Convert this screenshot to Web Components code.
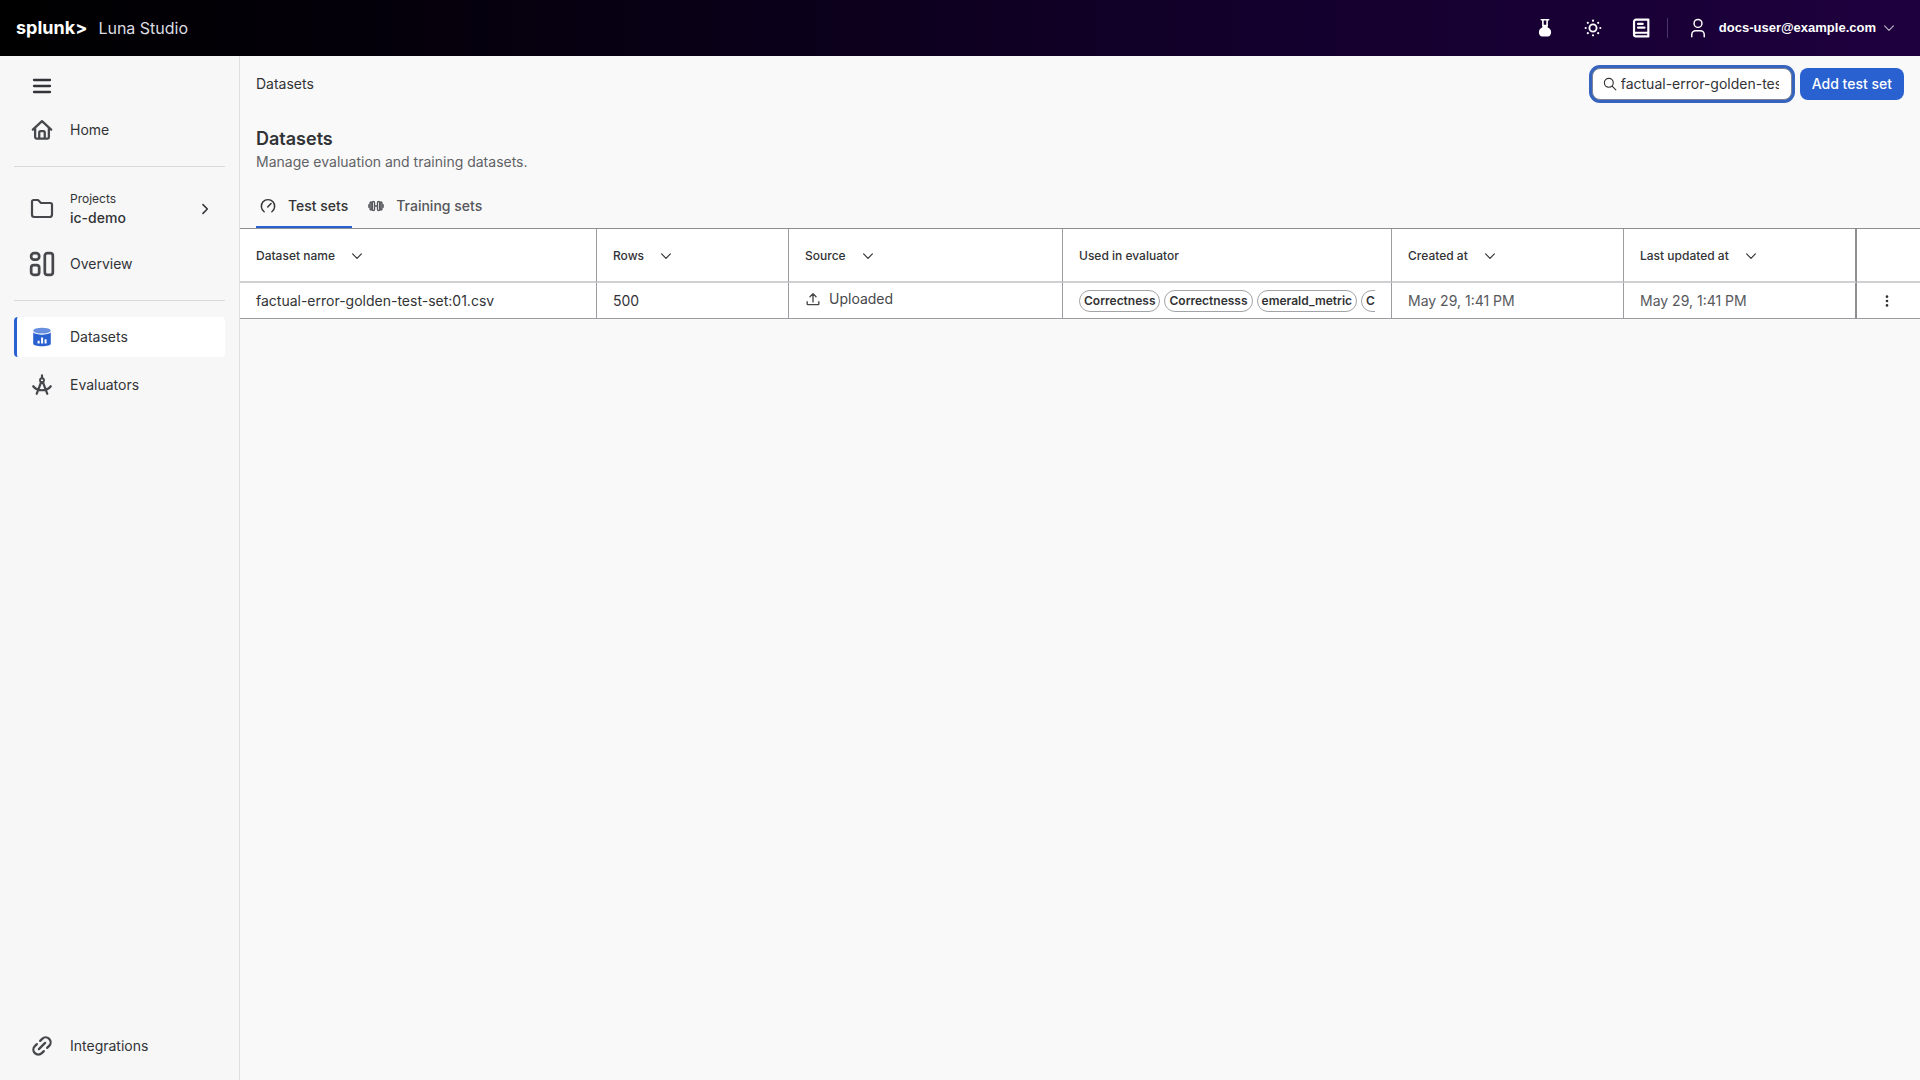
<!DOCTYPE html>
<html lang="en">
<head>
<meta charset="utf-8">
<meta name="viewport" content="width=device-width, initial-scale=1">
<title>Datasets - Luna Studio</title>
<style>
    :root {
        --text: #323336;
        --text-muted: #616266;
        --accent: #2a61d1;
        --surface: #f9f9f9;
        --line: #9c9da0;
    }
    body {
        margin: 0;
        font-family: Inter, "Liberation Sans", sans-serif;
        font-size: 14px;
        line-height: 20px;
        color: var(--text);
        background: var(--surface);
    }
</style>
</head>
<body>
<luna-app>
    <luna-header slot="header" product="Luna Studio" user="docs-user@example.com"></luna-header>
    <luna-sidebar slot="sidebar">
        <luna-nav-item icon="home" href="#home">Home</luna-nav-item>
        <hr>
        <luna-project-picker label="Projects">ic-demo</luna-project-picker>
        <luna-nav-item icon="overview" size="26" href="#overview">Overview</luna-nav-item>
        <hr>
        <luna-nav-item icon="database" href="#datasets" active>Datasets</luna-nav-item>
        <luna-nav-item icon="compass" href="#evaluators">Evaluators</luna-nav-item>
        <luna-nav-item slot="footer" icon="link" href="#integrations">Integrations</luna-nav-item>
    </luna-sidebar>
    <luna-toolbar crumb="Datasets" query="factual-error-golden-test-set">Add test set</luna-toolbar>
    <luna-page-title>
        Datasets
        <span slot="description">Manage evaluation and training datasets.</span>
    </luna-page-title>
    <luna-tabs></luna-tabs>
    <luna-dataset-table></luna-dataset-table>
</luna-app>

<script>
const ICONS = {
    menu: '<path d="M4 6h16M4 12h16M4 18h16" stroke-width="2.300"/>',
    home: '<path d="M2 11.600 12 2.400l10 9.200M4.500 10v9.600a1.800 1.800 0 0 0 1.800 1.800h11.400a1.800 1.800 0 0 0 1.800-1.800V10M9 21v-6.200a1.500 1.500 0 0 1 1.500-1.500h3a1.500 1.500 0 0 1 1.500 1.500V21" stroke-width="2.500"/>',
    folder: '<path d="M2 17.800V4.600A1.600 1.600 0 0 1 3.600 3h4.400l3 3h9.400a1.600 1.600 0 0 1 1.600 1.600v10.200a2.200 2.200 0 0 1-2.200 2.200H4.200a2.200 2.200 0 0 1-2.200-2.200z" stroke-width="2.200"/>',
    overview: '<rect x="2" y="2" width="7.400" height="6" rx="2.800" stroke-width="2.500"/><rect x="2" y="13" width="7.400" height="9" rx="2.400" stroke-width="2.500"/><rect x="14.600" y="2" width="7.400" height="20" rx="2.400" stroke-width="2.500"/>',
    database: '<g stroke="none" fill="var(--accent)"><ellipse cx="12" cy="5" rx="9.600" ry="3.200" opacity=".7"/><path d="M2.400 7.200c2 1.600 5.600 2.300 9.600 2.300s7.600-.7 9.600-2.300v11.800c0 2-4.200 3-9.600 3s-9.600-1-9.600-3z"/><path d="M7.200 16h2.200v3.200H7.200zM11 12.600h2.200v6.600H11zM14.800 14.400H17v4.800h-2.200z" fill="#fff"/></g>',
    compass: '<circle cx="12" cy="6.800" r="2.200"/><path d="M12 1.600v3M11 9 6.200 21.600M13 9l4.800 12.600M2.400 13.400c4.400 5.800 14.800 5.800 19.200 0" stroke-width="2.400"/>',
    link: '<path d="M8.600 15.400l6.800-6.800M10 6.400l2.200-2.200a5.200 5.200 0 0 1 7.600 7.600L17.600 14M6.400 10l-2.200 2.200a5.200 5.200 0 0 0 7.600 7.600L14 17.600" stroke-width="2.500"/>',
    flask: '<path d="M8 3h8M9.700 3v6.500M14.300 3v6.500" stroke-width="1.800"/><path d="M9.200 8.500h5.600v2.800c2.400 1.200 3.900 3 3.900 5.400 0 2.400-1.500 4.700-3.700 4.700H9c-2.200 0-3.700-2.300-3.700-4.700 0-2.400 1.500-4.200 3.900-5.400z" fill="currentColor" stroke="none"/>',
    sun: '<circle cx="12" cy="12" r="4.300" stroke-width="2.200"/><g fill="currentColor" stroke="none"><circle cx="12" cy="3.200" r="1.300"/><circle cx="12" cy="20.800" r="1.300"/><circle cx="3.200" cy="12" r="1.300"/><circle cx="20.800" cy="12" r="1.300"/><circle cx="5.800" cy="5.800" r="1.300"/><circle cx="18.200" cy="5.800" r="1.300"/><circle cx="5.800" cy="18.200" r="1.300"/><circle cx="18.200" cy="18.200" r="1.300"/></g>',
    book: '<path d="M4.400 19V5a2.200 2.200 0 0 1 2.200-2.200H20v14.400H6.400a2 2 0 0 0 0 4H20v-4M8.800 7.600h5M8.800 11.600h7" stroke-width="2.400"/>',
    user: '<circle cx="12" cy="7" r="4.300" stroke-width="1.600"/><path d="M5.200 21.600v-2.400a4.300 4.300 0 0 1 4.300-4.300h5a4.300 4.300 0 0 1 4.300 4.300v2.400" stroke-width="1.600"/>',
    down: '<path d="M4.500 8.500 12 16l7.500-7.500"/>',
    right: '<path d="M8.500 4.500 16 12l-7.500 7.500" stroke-width="2.600"/>',
    search: '<circle cx="10" cy="10" r="7.600"/><path d="M15.600 15.600 22 22"/>',
    gauge: '<path d="M6.200 20.600a10 10 0 1 1 11.600 0M11.600 13.600l5-5.400" stroke-width="2.200"/>',
    dumbbell: '<path d="M1.400 10v4M22.600 10v4M10 12h4" stroke-width="2.200"/><rect x="3" y="6" width="3" height="12" rx="1.500" fill="currentColor" fill-opacity=".5"/><rect x="6.600" y="5" width="3.200" height="14" rx="1.600"/><rect x="14.200" y="5" width="3.200" height="14" rx="1.600"/><rect x="18" y="6" width="3" height="12" rx="1.500" fill="currentColor" fill-opacity=".5"/>',
    upload: '<path d="M12 17V3M6.800 8 12 2.800 17.200 8M2 16.500v4a1.200 1.200 0 0 0 1.200 1.200h17.600a1.200 1.200 0 0 0 1.200-1.200v-4" stroke-width="2.300"/>',
    more: '<g fill="currentColor" stroke="none"><circle cx="12" cy="4.500" r="2.300"/><circle cx="12" cy="12" r="2.300"/><circle cx="12" cy="19.500" r="2.300"/></g>'
};

class LunaIcon extends HTMLElement {
    connectedCallback() {
        const size = this.getAttribute('size') || 24;
        this.attachShadow({ mode: 'open' }).innerHTML = `
            <style>
                :host { display: inline-flex; flex: none; }
                svg {
                    display: block;
                    fill: none;
                    stroke: currentColor;
                    stroke-width: 2;
                    stroke-linecap: round;
                    stroke-linejoin: round;
                }
            </style>
            <svg width="${size}" height="${size}" viewBox="0 0 24 24" aria-hidden="true">${ICONS[this.getAttribute('name')]}</svg>
        `;
    }
}

class LunaApp extends HTMLElement {
    connectedCallback() {
        this.attachShadow({ mode: 'open' }).innerHTML = `
            <style>
                :host {
                    display: grid;
                    grid-template: auto 1fr / 240px minmax(0, 1fr);
                    min-height: 100vh;
                }
                slot[name="header"] { display: block; grid-column: 1 / -1; }
                slot[name="sidebar"] { display: grid; }
            </style>
            <slot name="header"></slot>
            <slot name="sidebar"></slot>
            <main><slot></slot></main>
        `;
    }
}

class LunaHeader extends HTMLElement {
    connectedCallback() {
        this.attachShadow({ mode: 'open' }).innerHTML = `
            <style>
                :host { display: block; }
                header {
                    display: flex;
                    align-items: center;
                    height: 56px;
                    padding: 0 24px 0 16px;
                    box-sizing: border-box;
                    color: #fff;
                    background: linear-gradient(90deg, #000 0%, #05000d 25%, #12002a 62%, #1e003e 100%);
                }
                a { color: inherit; text-decoration: none; }
                .brand { display: flex; align-items: center; gap: 11px; margin-right: auto; }
                .logo { font-size: 18px; font-weight: 700; }
                .product { font-size: 16px; color: #dcdce2; }
                button {
                    display: flex;
                    align-items: center;
                    padding: 0;
                    border: 0;
                    background: none;
                    color: inherit;
                    font: inherit;
                    cursor: pointer;
                }
                .tools { display: flex; align-items: center; gap: 27px; }
                .split { width: 1px; height: 20px; margin: 0 19px 0 15px; background: #4a3468; }
                .account { gap: 10px; font: bold 13px/20px "Liberation Sans", Arial, sans-serif; }
                .account .caret { margin-left: -4px; opacity: .7; }
            </style>
            <header>
                <a class="brand" href="#home">
                    <span class="logo">splunk&gt;</span>
                    <span class="product">${this.getAttribute('product')}</span>
                </a>
                <div class="tools">
                    <button aria-label="Labs"><luna-icon name="flask" size="22"></luna-icon></button>
                    <button aria-label="Theme"><luna-icon name="sun" size="20"></luna-icon></button>
                    <button aria-label="Documentation"><luna-icon name="book" size="22"></luna-icon></button>
                </div>
                <div class="split"></div>
                <button class="account">
                    <luna-icon name="user" size="22"></luna-icon>
                    <span>${this.getAttribute('user')}</span>
                    <luna-icon class="caret" name="down" size="14"></luna-icon>
                </button>
            </header>
        `;
    }
}

class LunaSidebar extends HTMLElement {
    connectedCallback() {
        this.attachShadow({ mode: 'open' }).innerHTML = `
            <style>
                :host {
                    display: flex;
                    flex-direction: column;
                    padding: 14px;
                    background: #f7f7f8;
                    border-right: 1px solid #dfdfe2;
                }
                .toggle {
                    display: flex;
                    align-self: flex-start;
                    padding: 4px 16px;
                    border: 0;
                    background: none;
                    color: inherit;
                    cursor: pointer;
                }
                nav { display: flex; flex-direction: column; flex: 1; gap: 8px; padding-top: 8px; }
                ::slotted(hr) {
                    width: 100%;
                    height: 1px;
                    margin: 8px 0;
                    border: 0;
                    background: #d9d9dc;
                }
                .footer { margin-top: auto; }
            </style>
            <button class="toggle" aria-label="Collapse menu"><luna-icon name="menu"></luna-icon></button>
            <nav>
                <slot></slot>
                <div class="footer"><slot name="footer"></slot></div>
            </nav>
        `;
    }
}

class LunaNavItem extends HTMLElement {
    connectedCallback() {
        this.attachShadow({ mode: 'open' }).innerHTML = `
            <style>
                :host { display: block; }
                a {
                    display: flex;
                    align-items: center;
                    gap: 14px;
                    height: 40px;
                    padding-left: 14px;
                    border-radius: 4px;
                    color: inherit;
                    text-decoration: none;
                }
                .icon { display: flex; justify-content: center; width: 28px; color: #47484c; }
                :host([active]) a {
                    padding-left: 11px;
                    border-left: 3px solid var(--accent);
                    background: #fff;
                }
            </style>
            <a href="${this.getAttribute('href')}">
                <span class="icon"><luna-icon name="${this.getAttribute('icon')}" size="${this.getAttribute('size') || 22}"></luna-icon></span>
                <slot></slot>
            </a>
        `;
    }
}

class LunaProjectPicker extends HTMLElement {
    connectedCallback() {
        this.attachShadow({ mode: 'open' }).innerHTML = `
            <style>
                :host { display: block; }
                button {
                    display: flex;
                    align-items: center;
                    gap: 14px;
                    width: 100%;
                    height: 53px;
                    padding: 0 13px 2px 14px;
                    border: 0;
                    background: none;
                    color: inherit;
                    font: inherit;
                    text-align: left;
                    cursor: pointer;
                }
                .icon { display: flex; justify-content: center; width: 28px; color: #47484c; }
                .text { display: flex; flex-direction: column; flex: 1; }
                .label { font-size: 12px; line-height: 18px; }
                .value { font-weight: 500; }
            </style>
            <button>
                <span class="icon"><luna-icon name="folder"></luna-icon></span>
                <span class="text">
                    <span class="label">${this.getAttribute('label')}</span>
                    <span class="value"><slot></slot></span>
                </span>
                <luna-icon name="right" size="14"></luna-icon>
            </button>
        `;
    }
}

class LunaToolbar extends HTMLElement {
    connectedCallback() {
        this.attachShadow({ mode: 'open' }).innerHTML = `
            <style>
                :host {
                    display: flex;
                    align-items: center;
                    gap: 8px;
                    padding: 12px 16px;
                }
                a { margin-right: auto; color: inherit; text-decoration: none; }
                label {
                    display: flex;
                    align-items: center;
                    gap: 4px;
                    width: 200px;
                    height: 32px;
                    padding: 0 12px 0 10px;
                    box-sizing: border-box;
                    border: 1px solid #7b8599;
                    border-radius: 8px;
                    background: #fff;
                    box-shadow: 0 0 0 3px #3563bd;
                }
                input {
                    flex: 1;
                    min-width: 0;
                    padding: 0;
                    border: 0;
                    outline: 0;
                    background: none;
                    color: inherit;
                    font: inherit;
                }
                button {
                    height: 32px;
                    padding: 0 12px;
                    border: 0;
                    border-radius: 8px;
                    background: var(--accent);
                    color: #fff;
                    font: inherit;
                    font-weight: 500;
                    cursor: pointer;
                }
            </style>
            <a href="#datasets">${this.getAttribute('crumb')}</a>
            <label>
                <luna-icon name="search" size="14"></luna-icon>
                <input type="text" aria-label="Search datasets" value="${this.getAttribute('query')}">
            </label>
            <button><slot></slot></button>
        `;
    }
}

class LunaPageTitle extends HTMLElement {
    connectedCallback() {
        this.attachShadow({ mode: 'open' }).innerHTML = `
            <style>
                :host { display: block; padding: 15px 16px 0; }
                h1 { margin: 0; font-size: 18px; line-height: 24px; font-weight: 600; }
                p { margin: 1px 0 0; color: var(--text-muted); }
            </style>
            <h1><slot></slot></h1>
            <p><slot name="description"></slot></p>
        `;
    }
}

class LunaTabs extends HTMLElement {
    connectedCallback() {
        this.attachShadow({ mode: 'open' }).innerHTML = `
            <style>
                :host { display: flex; gap: 12px; padding: 12px 16px 0; }
                button {
                    display: flex;
                    align-items: center;
                    gap: 12px;
                    height: 44px;
                    padding: 2px 4px 0;
                    border: 0;
                    border-bottom: 2px solid transparent;
                    background: none;
                    color: #55565a;
                    font: inherit;
                    font-weight: 500;
                    cursor: pointer;
                }
                button[aria-selected="true"] { color: var(--text); border-color: var(--accent); }
            </style>
            <button role="tab" aria-selected="true"><luna-icon name="gauge" size="16"></luna-icon>Test sets</button>
            <button role="tab" aria-selected="false"><luna-icon name="dumbbell" size="16"></luna-icon>Training sets</button>
        `;
    }
}

class LunaChip extends HTMLElement {
    connectedCallback() {
        this.attachShadow({ mode: 'open' }).innerHTML = `
            <style>
                :host {
                    flex: none;
                    padding: 0 4px;
                    border: 1px solid #a3a4a8;
                    border-radius: 11px;
                    font-size: 12px;
                    line-height: 20px;
                    font-weight: 600;
                }
            </style>
            <slot></slot>
        `;
    }
}

class LunaDatasetTable extends HTMLElement {
    constructor() {
        super();
        this.columns = [
            { label: 'Dataset name', width: 357, sortable: true },
            { label: 'Rows', width: 192, sortable: true },
            { label: 'Source', width: 274, sortable: true },
            { label: 'Used in evaluator', width: 329 },
            { label: 'Created at', width: 232, sortable: true },
            { label: 'Last updated at', width: 233, sortable: true },
            { label: '', width: 63 }
        ];
        this.rows = [{
            name: 'factual-error-golden-test-set:01.csv',
            count: 500,
            source: 'Uploaded',
            evaluators: ['Correctness', 'Correctnesss', 'emerald_metric', 'Cost'],
            created: 'May 29, 1:41 PM',
            updated: 'May 29, 1:41 PM'
        }];
    }

    connectedCallback() {
        const cols = this.columns.map(c => `<col style="width: ${c.width}px">`).join('');
        const head = this.columns.map(c => c.sortable
            ? `<th scope="col"><button>${c.label}<luna-icon name="down" size="14"></luna-icon></button></th>`
            : `<th scope="col">${c.label}</th>`).join('');
        const body = this.rows.map(r => `
            <tr>
                <td>${r.name}</td>
                <td>${r.count}</td>
                <td><span class="source"><luna-icon name="upload" size="14"></luna-icon>${r.source}</span></td>
                <td><div class="chips">${r.evaluators.map(e => `<luna-chip>${e}</luna-chip>`).join('')}</div></td>
                <td class="muted">${r.created}</td>
                <td class="muted">${r.updated}</td>
                <td class="actions"><button aria-label="Row actions"><luna-icon name="more" size="14"></luna-icon></button></td>
            </tr>
        `).join('');

        this.attachShadow({ mode: 'open' }).innerHTML = `
            <style>
                :host { display: block; border-top: 1px solid #8d8e92; }
                table {
                    width: 100%;
                    table-layout: fixed;
                    border-collapse: separate;
                    border-spacing: 0;
                    background: #fff;
                }
                th, td {
                    padding: 0 16px;
                    box-sizing: border-box;
                    border-right: 1px solid var(--line);
                    text-align: left;
                    white-space: nowrap;
                }
                th {
                    height: 54px;
                    padding-top: 2px;
                    border-bottom: 2px solid #d0d0d2;
                    font-size: 12px;
                    font-weight: 500;
                }
                td { height: 36px; border-bottom: 1px solid var(--line); }
                th:nth-last-child(2), td:nth-last-child(2) { border-right: 2px solid #8d8e92; }
                th:last-child, td:last-child { border-right: 0; }
                button {
                    display: flex;
                    align-items: center;
                    gap: 15px;
                    padding: 0;
                    border: 0;
                    background: none;
                    color: inherit;
                    font: inherit;
                    cursor: pointer;
                }
                .muted { color: #58595d; }
                .source { display: flex; align-items: center; gap: 9px; padding: 0 1px 4px; color: #46474a; }
                .chips { display: flex; gap: 4px; overflow: hidden; }
                .actions { padding: 0 18px 0 14px; }
                .actions button { margin: 0 auto; }
            </style>
            <table>
                <colgroup>${cols}</colgroup>
                <thead><tr>${head}</tr></thead>
                <tbody>${body}</tbody>
            </table>
        `;
    }
}

customElements.define('luna-icon', LunaIcon);
customElements.define('luna-app', LunaApp);
customElements.define('luna-header', LunaHeader);
customElements.define('luna-sidebar', LunaSidebar);
customElements.define('luna-nav-item', LunaNavItem);
customElements.define('luna-project-picker', LunaProjectPicker);
customElements.define('luna-toolbar', LunaToolbar);
customElements.define('luna-page-title', LunaPageTitle);
customElements.define('luna-tabs', LunaTabs);
customElements.define('luna-chip', LunaChip);
customElements.define('luna-dataset-table', LunaDatasetTable);
</script>
</body>
</html>
